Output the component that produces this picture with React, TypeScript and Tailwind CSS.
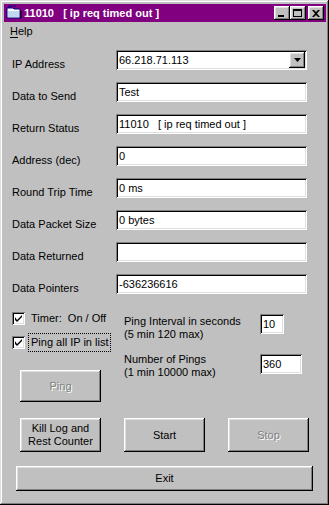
import React from "react";

const raised =
  "shadow-[inset_-1px_-1px_0_#000,inset_1px_1px_0_#fff,inset_-2px_-2px_0_#808080,inset_2px_2px_0_#dfdfdf]";
const sunken =
  "shadow-[inset_1px_1px_0_#808080,inset_-1px_-1px_0_#fff,inset_2px_2px_0_#000,inset_-2px_-2px_0_#dfdfdf]";

function Field({ value, w = "w-[191px]" }: { value: string; w?: string }) {
  return (
    <div className={`${w} h-[20px] bg-white ${sunken} flex items-center pl-[3px] leading-[13px] whitespace-pre`}>
      {value}
    </div>
  );
}

function Row({ label, children }: { label: string; children: React.ReactNode }) {
  return (
    <div className="flex items-start h-[20px]">
      <div className="w-[104px] pt-[8px] leading-[13px]">{label}</div>
      {children}
    </div>
  );
}

function Check({ label, focus }: { label: string; focus?: boolean }) {
  return (
    <div className="flex items-center h-[14px]">
      <div className={`w-[13px] h-[13px] bg-white ${sunken} flex items-center justify-center`}>
        <svg width="7" height="7" viewBox="0 0 7 7">
          <path d="M0 2 L0 5 L2 7 L7 2 L7 0 L2 5 Z" fill="#000" />
        </svg>
      </div>
      <span
        className={`ml-[6px] leading-[13px] ${
          focus ? "outline outline-1 outline-dotted outline-black outline-offset-[2px]" : ""
        } whitespace-pre`}
      >
        {label}
      </span>
    </div>
  );
}

function Btn({
  children,
  w,
  h,
  disabled,
  className = "",
}: {
  children: React.ReactNode;
  w: string;
  h: string;
  disabled?: boolean;
  className?: string;
}) {
  return (
    <div
      className={`${w} ${h} ${raised} flex items-center justify-center text-center leading-[13px] ${
        disabled ? "text-[#808080] [text-shadow:1px_1px_0_#fff]" : "text-black"
      } ${className}`}
    >
      {children}
    </div>
  );
}

function TitleBtn({ children }: { children: React.ReactNode }) {
  return (
    <div className={`w-[16px] h-[14px] bg-[#c0c0c0] ${raised} flex items-center justify-center`}>{children}</div>
  );
}

export default function App() {
  return (
    <div
      className={`w-[329px] h-[505px] bg-[#c0c0c0] shadow-[inset_-1px_-1px_0_#000,inset_1px_1px_0_#dfdfdf,inset_-2px_-2px_0_#808080,inset_2px_2px_0_#fff] pl-[4px] pr-[3px] pt-[4px] flex flex-col text-[11px] text-black font-['Liberation_Sans',Arial,sans-serif] overflow-hidden`}
    >
      {/* Title bar */}
      <div className="h-[18px] bg-[#800080] flex items-center pl-[2px] pr-[2px]">
        <svg width="16" height="16" viewBox="0 0 16 16" className="shrink-0">
          <path d="M1 3 H7 L8 4 H14 V13 H1 Z" fill="#fff" stroke="#000080" strokeWidth="1" />
          <path d="M2 6 H13 V12 H2 Z" fill="#c0d8f0" />
          <path d="M3 3 V1 H10" fill="none" stroke="#000080" strokeWidth="1" />
          <path d="M14 13 H15 V6" fill="none" stroke="#000" strokeWidth="1" />
        </svg>
        <span className="ml-[2px] text-white font-bold whitespace-pre leading-[13px]">11010   [ ip req timed out ]</span>
        <div className="ml-auto flex items-center">
          <TitleBtn>
            <div className="w-[6px] h-[2px] bg-black mt-[6px] -ml-[2px]" />
          </TitleBtn>
          <TitleBtn>
            <div className="w-[9px] h-[8px] border border-black border-t-2 -ml-[1px]" />
          </TitleBtn>
          <div className="w-[2px]" />
          <TitleBtn>
            <svg width="8" height="7" viewBox="0 0 8 7" className="-ml-[1px]">
              <path d="M0 0 H2 L4 2 L6 0 H8 L5 3.5 L8 7 H6 L4 5 L2 7 H0 L3 3.5 Z" fill="#000" />
            </svg>
          </TitleBtn>
        </div>
      </div>

      {/* Menu bar */}
      <div className="h-[19px] flex items-center pl-[6px] leading-[13px]">
        <span>
          <span className="underline underline-offset-[2px]">H</span>elp
        </span>
      </div>

      {/* Form */}
      <div className="pl-[8px] mt-[9px] flex flex-col gap-[12px]">
        <Row label="IP Address">
          <div className={`w-[191px] h-[20px] bg-white ${sunken} flex items-center pl-[3px] pr-[2px] leading-[13px]`}>
            <span>66.218.71.113</span>
            <div className={`ml-auto w-[16px] h-[16px] bg-[#c0c0c0] ${raised} flex items-center justify-center`}>
              <svg width="7" height="4" viewBox="0 0 7 4">
                <path d="M0 0 H7 L3.5 4 Z" fill="#000" />
              </svg>
            </div>
          </div>
        </Row>
        <Row label="Data to Send">
          <Field value="Test" />
        </Row>
        <Row label="Return Status">
          <Field value="11010   [ ip req timed out ]" />
        </Row>
        <Row label="Address (dec)">
          <Field value="0" />
        </Row>
        <Row label="Round Trip Time">
          <Field value="0 ms" />
        </Row>
        <Row label="Data Packet Size">
          <Field value="0 bytes" />
        </Row>
        <Row label="Data Returned">
          <Field value="" />
        </Row>
        <Row label="Data Pointers">
          <Field value="-636236616" />
        </Row>
      </div>

      {/* Options */}
      <div className="pl-[8px] mt-[17px] flex">
        <div className="w-[112px] flex flex-col">
          <Check label="Timer:  On / Off" />
          <div className="mt-[10px]">
            <Check label="Ping all IP in list" focus />
          </div>
          <Btn w="w-[81px]" h="h-[32px]" disabled className="ml-[8px] mt-[21px]">
            Ping
          </Btn>
        </div>
        <div className="flex flex-col">
          <div className="flex items-start">
            <div className="w-[136px] mt-[4px] leading-[13px]">
              <div>Ping Interval in seconds</div>
              <div>(5 min 120 max)</div>
            </div>
            <div className="mt-[3px]">
              <Field value="10" w="w-[24px]" />
            </div>
          </div>
          <div className="flex items-start mt-[11px]">
            <div className="w-[136px] mt-[1px] leading-[13px]">
              <div>Number of Pings</div>
              <div>(1 min 10000 max)</div>
            </div>
            <div className="mt-[2px]">
              <Field value="360" w="w-[42px]" />
            </div>
          </div>
        </div>
      </div>

      {/* Buttons */}
      <div className="pl-[16px] mt-[16px] flex">
        <Btn w="w-[81px]" h="h-[34px]">
          <div>
            Kill Log and
            <br />
            Rest Counter
          </div>
        </Btn>
        <Btn w="w-[81px]" h="h-[34px]" className="ml-[23px]">
          Start
        </Btn>
        <Btn w="w-[81px]" h="h-[34px]" disabled className="ml-[23px]">
          Stop
        </Btn>
      </div>

      <div className="pl-[12px] mt-[14px] flex">
        <Btn w="w-[297px]" h="h-[25px]">
          Exit
        </Btn>
      </div>
    </div>
  );
}
